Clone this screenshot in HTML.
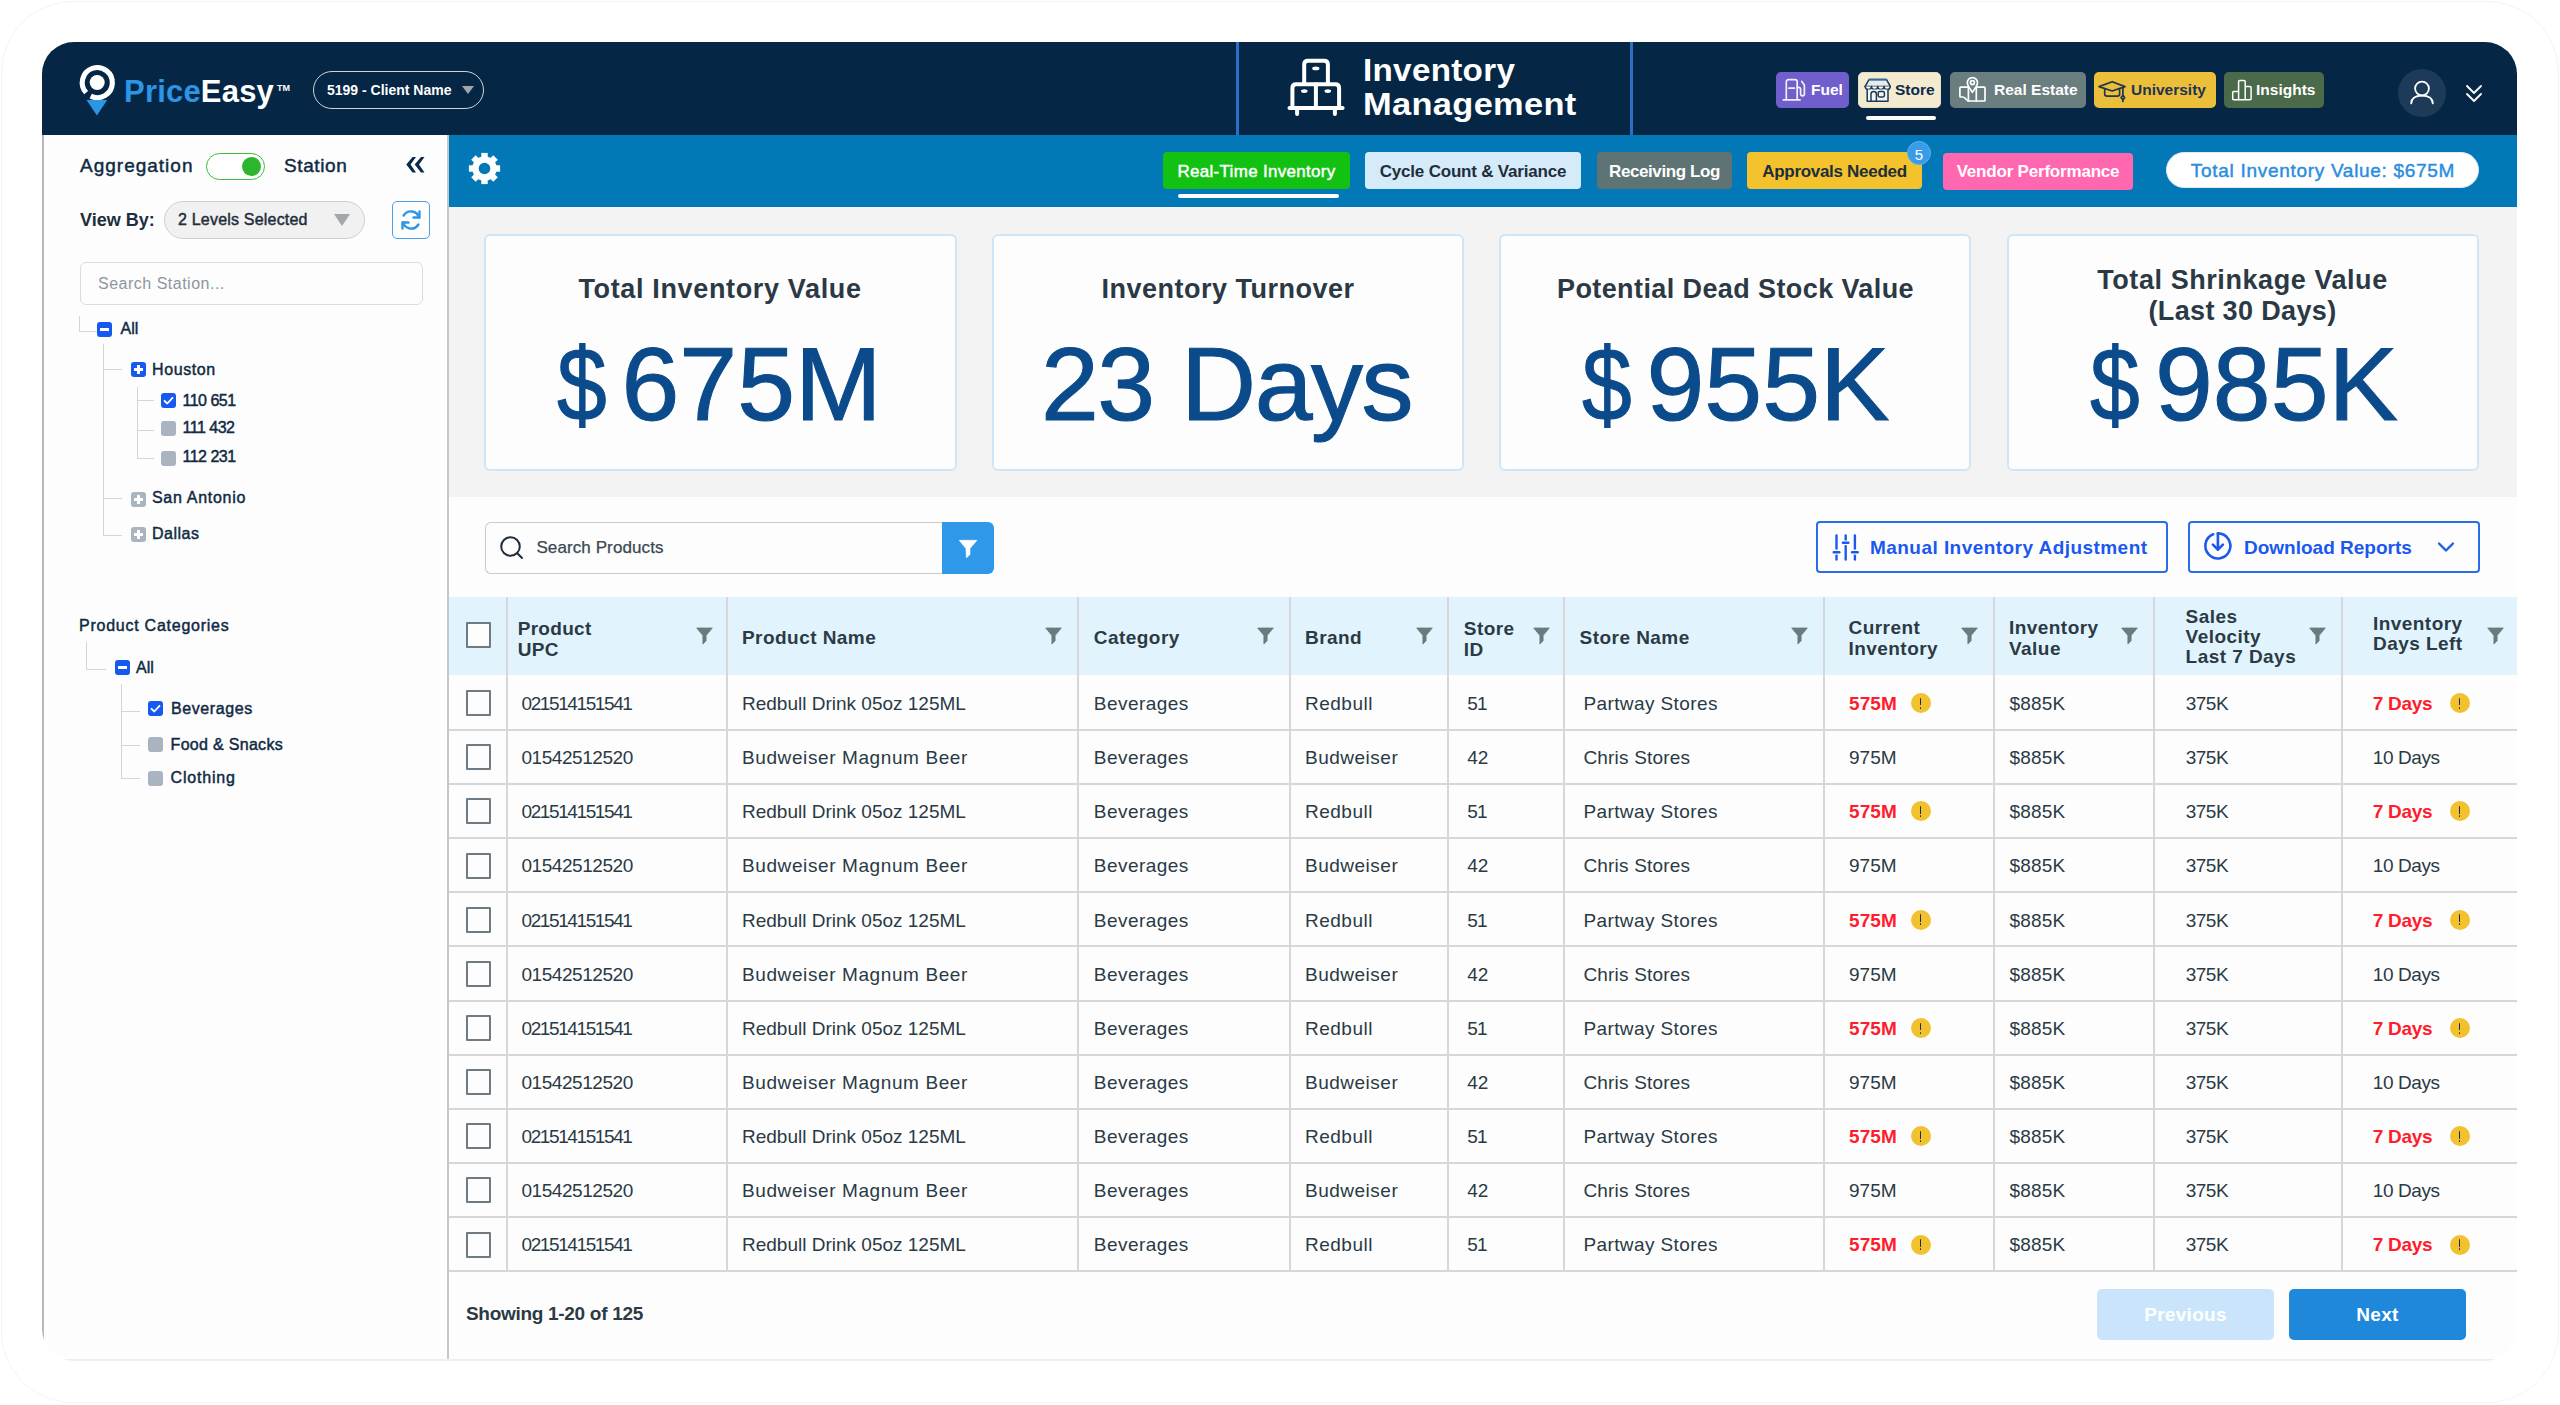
<!DOCTYPE html>
<html><head><meta charset="utf-8"><title>Inventory Management</title>
<style>
html,body{margin:0;padding:0;}
body{width:2560px;height:1405px;overflow:hidden;background:#ffffff;position:relative;font-family:"Liberation Sans", sans-serif;}
.t{position:absolute;white-space:nowrap;line-height:1;}
.r{position:absolute;box-sizing:border-box;}
#clip{position:absolute;left:0;top:0;width:2560px;height:1405px;clip-path:inset(42px 43px 44px 42px round 32px);}
</style></head><body>

<div class="r" style="left:1px;top:1px;width:2558px;height:1402px;border:1px solid #f3f4f5;border-radius:72px;"></div>
<div id="clip">
<div class="r" style="left:42px;top:42px;width:2475px;height:1319px;background:#fdfdfd;"></div>
<div class="r" style="left:42px;top:42px;width:2475px;height:93px;background:#052745;"></div>
<div class="r" style="left:448px;top:135px;width:2069px;height:72px;background:#0378b6;"></div>
<div class="r" style="left:448px;top:207px;width:2069px;height:290px;background:#f3f3f3;"></div>
<div class="r" style="left:42px;top:135px;width:2px;height:1226px;background:#b3b9bf;"></div>
<div class="r" style="left:447px;top:135px;width:2px;height:1226px;background:#c3c8cd;"></div>
<div class="r" style="left:42px;top:1359px;width:2475px;height:2px;background:#eceef0;"></div>
<svg class="r" style="left:76px;top:62px;" width="44" height="58" viewBox="0 0 44 58">
<path d="M10.12 30.67 A15.05 15.05 0 1 1 14.7 34.13" fill="none" stroke="#fff" stroke-width="5.1" stroke-linecap="butt"/>
<circle cx="21.2" cy="20.5" r="7.5" fill="#fff"/>
<path d="M10.5 37.9 L31.2 37.9 L20.9 53.5 Z" fill="#2b95e6"/>
</svg>
<div class="t" style="left:124px;top:75.8px;font-size:31px;color:#ffffff;font-weight:700;letter-spacing:0.2px;"><span style="color:#2b95e6">Price</span>Easy</div>
<div class="t" style="left:277px;top:83.9px;font-size:9px;color:#ffffff;font-weight:700;letter-spacing:0px;">TM</div>
<div class="r" style="left:313px;top:71px;width:171px;height:38px;border:1.5px solid #cfd3d6;border-radius:19px;"></div>
<div class="t" style="left:327px;top:82.6px;font-size:14px;color:#ffffff;font-weight:700;letter-spacing:0px;">5199 - Client Name</div>
<svg class="r" style="left:461px;top:85px;" width="14" height="10" viewBox="0 0 14 10"><path d="M1 1 L13 1 L7 9 Z" fill="#a3a6a8"/></svg>
<div class="r" style="left:1236px;top:42px;width:3px;height:93px;background:#2d6fc4;"></div>
<div class="r" style="left:1630px;top:42px;width:3px;height:93px;background:#2d6fc4;"></div>
<svg class="r" style="left:1280px;top:50px;" width="70" height="75" viewBox="0 0 70 75">
<g fill="none" stroke="#fff" stroke-width="4" stroke-linejoin="round" stroke-linecap="round">
<path d="M24.2 33 V14.6 Q24.2 10.8 28 10.8 H44.1 Q47.9 10.8 47.9 14.6 V33"/>
<path d="M12.4 57.8 V38.1 Q12.4 34.3 16.2 34.3 H55.3 Q59.1 34.3 59.1 38.1 V57.8"/>
<path d="M35.9 34.3 V57.8"/>
<path d="M9.5 58 H62.6"/>
<path d="M17.1 58.5 V63.9"/><path d="M54.9 58.5 V63.9"/>
</g>
<g fill="#fff"><ellipse cx="35.8" cy="18.4" rx="3.6" ry="1.9"/><ellipse cx="24.3" cy="41.1" rx="3.3" ry="1.9"/><ellipse cx="47.8" cy="41.1" rx="3.3" ry="1.9"/></g>
</svg>
<div class="t" style="left:1363px;top:54.8px;font-size:31px;color:#ffffff;font-weight:700;letter-spacing:0.3px;transform:scaleX(1.07);transform-origin:0 0;">Inventory</div>
<div class="t" style="left:1363px;top:88.8px;font-size:31px;color:#ffffff;font-weight:700;letter-spacing:0.3px;transform:scaleX(1.11);transform-origin:0 0;">Management</div>
<div class="r" style="left:1776px;top:72px;width:73px;height:36px;background:#6f5ecc;border-radius:5px;"></div>
<div class="t" style="left:1811px;top:82.4px;font-size:15.5px;color:#ffffff;font-weight:700;letter-spacing:0px;">Fuel</div>

<svg class="r" style="left:1778px;top:72px;" width="36" height="36" viewBox="0 0 36 36"><g fill="none" stroke="#f0f1f2" stroke-width="1.7" stroke-linecap="round" stroke-linejoin="round">
<path d="M8.3 27.7 V10 Q8.3 7.7 10.6 7.7 H17 Q19.2 7.7 19.2 10 V27.7"/><path d="M5.4 27.9 H22"/><path d="M10.9 16.2 H16.4"/>
<path d="M19.2 15.3 H20.6 Q22.6 15.3 22.6 17.6 V21.4 Q22.6 23.8 24.5 23.8 Q26.4 23.8 26.4 21.4 V13.3 L23.8 9.5"/></g></svg>
<div class="r" style="left:1858px;top:72px;width:83px;height:36px;background:#f3ead0;border-radius:5px;border:1px solid #e6dcc0;"></div>
<div class="t" style="left:1895px;top:82.4px;font-size:15.5px;color:#0b2a4a;font-weight:700;letter-spacing:0px;">Store</div>

<svg class="r" style="left:1860px;top:72px;" width="40" height="36" viewBox="0 0 40 36"><g fill="none" stroke="#1d3a57" stroke-width="1.5" stroke-linejoin="round" stroke-linecap="round">
<path d="M9.2 7.4 H26.4 L30.3 14.4 H5.1 Z" fill="#e9ebe8"/>
<path d="M9.6 7.6 H26" stroke="#2d6aa8" stroke-width="1.6"/>
<path d="M5.1 14.4 Q5.6 17.6 8.4 17.6 Q11.4 17.6 11.4 14.6 Q11.6 17.6 14.6 17.6 Q17.6 17.6 17.7 14.6 Q17.8 17.6 20.9 17.6 Q23.9 17.6 24 14.6 Q24.2 17.6 27.2 17.6 Q30 17.6 30.3 14.4" fill="#ffffff"/>
<path d="M7.2 17.4 V29.2 H28 V17.4" fill="#f4f4f2"/>
<path d="M11 29.2 V21.9 Q11 19.5 13.7 19.5 Q16.4 19.5 16.4 21.9 V29.2"/>
<rect x="18.2" y="19.6" width="6.2" height="5.3" rx="1.3"/></g></svg>
<div class="r" style="left:1866px;top:116px;width:70px;height:4px;background:#ffffff;border-radius:2px;"></div>
<div class="r" style="left:1950px;top:72px;width:136px;height:36px;background:#6a7e80;border-radius:5px;"></div>
<div class="t" style="left:1994px;top:82.4px;font-size:15.5px;color:#ffffff;font-weight:700;letter-spacing:0px;">Real Estate</div>

<svg class="r" style="left:1954px;top:72px;" width="36" height="36" viewBox="0 0 36 36"><g fill="none" stroke="#fff" stroke-width="1.7" stroke-linejoin="round" stroke-linecap="round">
<path d="M14.4 15.1 H6.8 Q5.9 15.1 5.9 16 V24.2 Q5.9 25 6.8 25 H8.6 Q10.2 25 11.6 26.6 L12.6 27.8 Q13.6 29 15 29 H30.2 Q31 29 31 28.2 V16 Q31 15.1 30.2 15.1 H22.3"/>
<path d="M14.4 15.1 V29"/><path d="M22.3 15.1 V29"/>
<path d="M18.4 20.4 L14.6 14.4 Q13.3 12.4 13.3 10.8 A5.1 5.1 0 0 1 23.5 10.8 Q23.5 12.4 22.2 14.4 Z" fill="#6a7e80"/>
<circle cx="18.4" cy="10.6" r="2"/></g></svg>
<div class="r" style="left:2094px;top:72px;width:122px;height:36px;background:#ecbf3b;border-radius:5px;"></div>
<div class="t" style="left:2131px;top:82.4px;font-size:15.5px;color:#1e3550;font-weight:700;letter-spacing:0px;">University</div>

<svg class="r" style="left:2096px;top:72px;" width="36" height="36" viewBox="0 0 36 36"><g fill="none" stroke="#1e3550" stroke-width="1.7" stroke-linejoin="round" stroke-linecap="round">
<path d="M3.1 14.6 L16.2 9.7 L29 14.6 L16.2 19 Z"/><path d="M8.7 17.2 V22.6 Q8.7 24.2 11 24.2 H21.4 Q23.6 24.2 23.6 22.6 V17.2"/>
<path d="M26.9 15.2 V23.6"/><path d="M26.9 23.4 L28.7 25.6 L26.9 27.6 L25.1 25.6 Z"/><path d="M26.9 27.6 V29.4"/></g></svg>
<div class="r" style="left:2224px;top:72px;width:100px;height:36px;background:#4a6a49;border-radius:5px;"></div>
<div class="t" style="left:2256px;top:82.4px;font-size:15.5px;color:#ffffff;font-weight:700;letter-spacing:0px;">Insights</div>

<svg class="r" style="left:2226px;top:72px;" width="36" height="36" viewBox="0 0 36 36"><g fill="none" stroke="#fff" stroke-width="1.5" stroke-linejoin="round">
<path d="M12.6 27.7 H7.6 Q6.7 27.7 6.7 26.8 V20.4 Q6.7 19.5 7.6 19.5 H12.6"/>
<path d="M12.6 27.7 V9.6 Q12.6 8.5 13.7 8.5 H18.1 Q19.2 8.5 19.2 9.6 V27.7 Z"/>
<path d="M19.2 14.6 H24 Q25.1 14.6 25.1 15.7 V26.6 Q25.1 27.7 24 27.7 H19.2"/></g></svg>
<div class="r" style="left:2398px;top:69px;width:48px;height:48px;background:#1d3a58;border-radius:50%;"></div>
<svg class="r" style="left:2408px;top:78px;" width="28" height="28" viewBox="0 0 28 28"><g fill="none" stroke="#fff" stroke-width="1.8" stroke-linecap="round">
<circle cx="14" cy="10.6" r="6.9"/><path d="M3.2 25.4 Q3.5 17.6 14 17.6 Q24.5 17.6 24.8 25.4"/></g></svg>
<svg class="r" style="left:2464px;top:83px;" width="20" height="22" viewBox="0 0 20 22"><g fill="none" stroke="#fff" stroke-width="1.8" stroke-linecap="round" stroke-linejoin="round">
<path d="M3 3 L10 10 L17 3"/><path d="M3 11 L10 18 L17 11"/></g></svg>
<svg class="r" style="left:466px;top:150px;" width="37" height="37" viewBox="0 0 37 37"><g fill="#fff"><circle cx="18.5" cy="18.5" r="12.2"/><rect x="15.3" y="2.9" width="6.4" height="8" transform="rotate(0 18.5 18.5)"/><rect x="15.3" y="2.9" width="6.4" height="8" transform="rotate(45 18.5 18.5)"/><rect x="15.3" y="2.9" width="6.4" height="8" transform="rotate(90 18.5 18.5)"/><rect x="15.3" y="2.9" width="6.4" height="8" transform="rotate(135 18.5 18.5)"/><rect x="15.3" y="2.9" width="6.4" height="8" transform="rotate(180 18.5 18.5)"/><rect x="15.3" y="2.9" width="6.4" height="8" transform="rotate(225 18.5 18.5)"/><rect x="15.3" y="2.9" width="6.4" height="8" transform="rotate(270 18.5 18.5)"/><rect x="15.3" y="2.9" width="6.4" height="8" transform="rotate(315 18.5 18.5)"/></g><circle cx="18.5" cy="18.5" r="5.8" fill="#0378b6"/></svg>
<div class="r" style="left:1163px;top:152px;width:187px;height:37px;background:#12c112;border-radius:4px;"></div>
<div class="t" style="left:1143.0px;width:227px;text-align:center;top:163.1px;font-size:17px;color:#ffffff;font-weight:400;letter-spacing:0.3px;-webkit-text-stroke:0.45px #ffffff;">Real-Time Inventory</div>
<div class="r" style="left:1178px;top:194px;width:161px;height:4px;background:#ffffff;border-radius:2px;"></div>
<div class="r" style="left:1365px;top:152px;width:216px;height:37px;background:#d5ebfa;border-radius:4px;"></div>
<div class="t" style="left:1345.0px;width:256px;text-align:center;top:163.1px;font-size:17px;color:#1e2e3c;font-weight:700;letter-spacing:-0.2px;">Cycle Count &amp; Variance</div>
<div class="r" style="left:1597px;top:152px;width:135px;height:37px;background:#5e7374;border-radius:4px;"></div>
<div class="t" style="left:1577.0px;width:175px;text-align:center;top:163.1px;font-size:17px;color:#ffffff;font-weight:700;letter-spacing:-0.4px;">Receiving Log</div>
<div class="r" style="left:1747px;top:152px;width:175px;height:37px;background:#f3c22d;border-radius:4px;"></div>
<div class="t" style="left:1727.0px;width:215px;text-align:center;top:163.1px;font-size:17px;color:#1e2e3c;font-weight:700;letter-spacing:-0.3px;">Approvals Needed</div>
<div class="r" style="left:1907px;top:141px;width:24px;height:24px;background:#3a9be8;border-radius:50%;border:1.5px solid #5fb0f0;"></div>
<div class="t" style="left:1904.0px;width:30px;text-align:center;top:146.8px;font-size:15px;color:#ffffff;font-weight:400;letter-spacing:0px;">5</div>
<div class="r" style="left:1943px;top:153px;width:190px;height:37px;background:#ff68b0;border-radius:4px;"></div>
<div class="t" style="left:1923.0px;width:230px;text-align:center;top:163.1px;font-size:17px;color:#ffffff;font-weight:700;letter-spacing:-0.2px;">Vendor Performance</div>
<div class="r" style="left:2166px;top:152px;width:313px;height:36px;background:#ffffff;border-radius:18px;border:1px solid #dfe9f2;"></div>
<div class="t" style="left:2153.0px;width:340px;text-align:center;top:161.4px;font-size:19px;color:#2b8de0;font-weight:400;letter-spacing:0.7px;-webkit-text-stroke:0.45px #2b8de0;">Total Inventory Value: $675M</div>
<div class="t" style="left:80px;top:156.4px;font-size:19px;color:#102a43;font-weight:400;letter-spacing:1.0px;-webkit-text-stroke:0.45px #102a43;">Aggregation</div>
<div class="r" style="left:206px;top:153px;width:59px;height:27px;border:1.6px solid #3cbb3c;border-radius:14px;background:#fff;"></div>
<div class="r" style="left:241.5px;top:156.5px;width:19.0px;height:19.0px;background:#2db52d;border-radius:50%;"></div>
<div class="t" style="left:284px;top:156.4px;font-size:19px;color:#102a43;font-weight:400;letter-spacing:0.6px;-webkit-text-stroke:0.45px #102a43;">Station</div>
<svg class="r" style="left:396px;top:148px;" width="40" height="32" viewBox="0 0 40 32"><g fill="#0a2a4a"><path d="M20 8.9 H16.6 L10.25 16.6 L16.6 24.6 H20 L14.6 16.6 Z"/><path d="M28.5 8.9 H25 L18.7 16.6 L25 24.6 H28.5 L23 16.6 Z"/></g></svg>
<div class="t" style="left:80px;top:210.8px;font-size:18px;color:#1e2e3c;font-weight:700;letter-spacing:0px;">View By:</div>
<div class="r" style="left:164px;top:201px;width:201px;height:38px;background:#f1f1f1;border:1.5px solid #cfcfcf;border-radius:19px;"></div>
<div class="t" style="left:178px;top:212.0px;font-size:16px;color:#1e2e3c;font-weight:400;letter-spacing:0.2px;-webkit-text-stroke:0.45px #1e2e3c;">2 Levels Selected</div>
<svg class="r" style="left:333px;top:213px;" width="18" height="14" viewBox="0 0 18 14"><path d="M1 1 L17 1 L9 13 Z" fill="#a4a7a9"/></svg>
<div class="r" style="left:392px;top:201px;width:38px;height:38px;border:1.5px solid #4a9ee8;border-radius:5px;background:#fdfdfd;"></div>
<svg class="r" style="left:399px;top:208px;" width="24" height="24" viewBox="0 0 24 24"><g fill="none" stroke="#3094e6" stroke-width="2.4" stroke-linecap="round" stroke-linejoin="round">
<path d="M20 9.5 A8.5 8.5 0 0 0 4.6 7.5"/><path d="M4 14.5 A8.5 8.5 0 0 0 19.4 16.5"/>
<path d="M20.5 3.5 V9.5 H14.5"/><path d="M3.5 20.5 V14.5 H9.5"/></g></svg>
<div class="r" style="left:80px;top:262px;width:343px;height:43px;border:1.5px solid #d9dcdf;border-radius:6px;background:#fdfdfd;"></div>
<div class="t" style="left:98px;top:275.5px;font-size:16px;color:#8d969d;font-weight:400;letter-spacing:0.5px;">Search Station...</div>
<div class="r" style="left:79px;top:316px;width:1px;height:15px;background:#d3d6d9;"></div>
<div class="r" style="left:79px;top:331px;width:18px;height:1px;background:#d3d6d9;"></div>
<div class="r" style="left:97px;top:322px;width:15px;height:15px;background:#1559f0;border-radius:3px;"></div>
<div class="r" style="left:100px;top:328px;width:9px;height:3px;background:#fff;"></div>
<div class="t" style="left:120.5px;top:320.5px;font-size:16px;color:#102a43;font-weight:400;letter-spacing:0px;-webkit-text-stroke:0.45px #102a43;">All</div>
<div class="r" style="left:103px;top:344px;width:1px;height:191px;background:#d3d6d9;"></div>
<div class="r" style="left:103px;top:369px;width:19px;height:1px;background:#d3d6d9;"></div>
<div class="r" style="left:103px;top:498px;width:19px;height:1px;background:#d3d6d9;"></div>
<div class="r" style="left:103px;top:535px;width:19px;height:1px;background:#d3d6d9;"></div>
<div class="r" style="left:131px;top:362px;width:15px;height:15px;background:#1559f0;border-radius:3px;"></div>
<div class="r" style="left:134px;top:368px;width:9px;height:3px;background:#fff;"></div>
<div class="r" style="left:137px;top:365px;width:3px;height:9px;background:#fff;"></div>
<div class="t" style="left:152px;top:361.5px;font-size:16px;color:#102a43;font-weight:400;letter-spacing:0.6px;-webkit-text-stroke:0.45px #102a43;">Houston</div>
<div class="r" style="left:137px;top:387px;width:1px;height:72px;background:#d3d6d9;"></div>
<div class="r" style="left:137px;top:400px;width:17px;height:1px;background:#d3d6d9;"></div>
<div class="r" style="left:137px;top:430px;width:17px;height:1px;background:#d3d6d9;"></div>
<div class="r" style="left:137px;top:458px;width:17px;height:1px;background:#d3d6d9;"></div>
<div class="r" style="left:161px;top:393px;width:15px;height:15px;background:#1559f0;border-radius:3px;"></div>
<svg class="r" style="left:161px;top:393px;" width="15" height="15" viewBox="0 0 15 15"><path d="M3.5 7.8 L6.3 10.5 L11.5 4.8" fill="none" stroke="#fff" stroke-width="1.8" stroke-linecap="round" stroke-linejoin="round"/></svg>
<div class="t" style="left:182.5px;top:392.5px;font-size:16px;color:#102a43;font-weight:400;letter-spacing:-0.5px;-webkit-text-stroke:0.45px #102a43;">110 651</div>
<div class="r" style="left:161px;top:421px;width:15px;height:15px;background:#a9b4c0;border-radius:3px;"></div>
<div class="t" style="left:182.5px;top:419.8px;font-size:16px;color:#102a43;font-weight:400;letter-spacing:-0.5px;-webkit-text-stroke:0.45px #102a43;">111 432</div>
<div class="r" style="left:161px;top:451px;width:15px;height:15px;background:#a9b4c0;border-radius:3px;"></div>
<div class="t" style="left:182.5px;top:449.1px;font-size:16px;color:#102a43;font-weight:400;letter-spacing:-0.5px;-webkit-text-stroke:0.45px #102a43;">112 231</div>
<div class="r" style="left:131px;top:492px;width:15px;height:15px;background:#a9b4bf;border-radius:3px;"></div>
<div class="r" style="left:134px;top:498px;width:9px;height:3px;background:#fff;"></div>
<div class="r" style="left:137px;top:495px;width:3px;height:9px;background:#fff;"></div>
<div class="t" style="left:152px;top:490.2px;font-size:16px;color:#102a43;font-weight:400;letter-spacing:0.7px;-webkit-text-stroke:0.45px #102a43;">San Antonio</div>
<div class="r" style="left:131px;top:527px;width:15px;height:15px;background:#a9b4bf;border-radius:3px;"></div>
<div class="r" style="left:134px;top:533px;width:9px;height:3px;background:#fff;"></div>
<div class="r" style="left:137px;top:530px;width:3px;height:9px;background:#fff;"></div>
<div class="t" style="left:152px;top:526.3px;font-size:16px;color:#102a43;font-weight:400;letter-spacing:0.5px;-webkit-text-stroke:0.45px #102a43;">Dallas</div>
<div class="t" style="left:79px;top:618.2px;font-size:16px;color:#102a43;font-weight:400;letter-spacing:0.75px;-webkit-text-stroke:0.45px #102a43;">Product Categories</div>
<div class="r" style="left:86px;top:642px;width:1px;height:27px;background:#d3d6d9;"></div>
<div class="r" style="left:86px;top:669px;width:20px;height:1px;background:#d3d6d9;"></div>
<div class="r" style="left:114.5px;top:660px;width:15.0px;height:15px;background:#1559f0;border-radius:3px;"></div>
<div class="r" style="left:117.5px;top:666px;width:9.0px;height:3px;background:#fff;"></div>
<div class="t" style="left:136px;top:659.5px;font-size:16px;color:#102a43;font-weight:400;letter-spacing:0px;-webkit-text-stroke:0.45px #102a43;">All</div>
<div class="r" style="left:121px;top:684px;width:1px;height:95px;background:#d3d6d9;"></div>
<div class="r" style="left:121px;top:711px;width:19px;height:1px;background:#d3d6d9;"></div>
<div class="r" style="left:121px;top:745px;width:19px;height:1px;background:#d3d6d9;"></div>
<div class="r" style="left:121px;top:778px;width:19px;height:1px;background:#d3d6d9;"></div>
<div class="r" style="left:148px;top:701px;width:15px;height:15px;background:#1559f0;border-radius:3px;"></div>
<svg class="r" style="left:148px;top:701px;" width="15" height="15" viewBox="0 0 15 15"><path d="M3.5 7.8 L6.3 10.5 L11.5 4.8" fill="none" stroke="#fff" stroke-width="1.8" stroke-linecap="round" stroke-linejoin="round"/></svg>
<div class="t" style="left:171px;top:700.5px;font-size:16px;color:#102a43;font-weight:400;letter-spacing:0.6px;-webkit-text-stroke:0.45px #102a43;">Beverages</div>
<div class="r" style="left:148px;top:737px;width:15px;height:15px;background:#a9b4c0;border-radius:3px;"></div>
<div class="t" style="left:170.6px;top:736.5px;font-size:16px;color:#102a43;font-weight:400;letter-spacing:0.3px;-webkit-text-stroke:0.45px #102a43;">Food &amp; Snacks</div>
<div class="r" style="left:148px;top:771px;width:15px;height:15px;background:#a9b4c0;border-radius:3px;"></div>
<div class="t" style="left:170.6px;top:769.5px;font-size:16px;color:#102a43;font-weight:400;letter-spacing:0.8px;-webkit-text-stroke:0.45px #102a43;">Clothing</div>
<div class="r" style="left:484px;top:234px;width:473px;height:237px;background:#fdfdfd;border:2px solid #cfe6f8;border-radius:6px;"></div>
<div class="r" style="left:992px;top:234px;width:472px;height:237px;background:#fdfdfd;border:2px solid #cfe6f8;border-radius:6px;"></div>
<div class="r" style="left:1499px;top:234px;width:472px;height:237px;background:#fdfdfd;border:2px solid #cfe6f8;border-radius:6px;"></div>
<div class="r" style="left:2007px;top:234px;width:472px;height:237px;background:#fdfdfd;border:2px solid #cfe6f8;border-radius:6px;"></div>
<div class="t" style="left:420.0px;width:600px;text-align:center;top:275.6px;font-size:27px;color:#2b3945;font-weight:700;letter-spacing:0.65px;">Total Inventory Value</div>
<div class="t" style="left:928.0px;width:600px;text-align:center;top:275.6px;font-size:27px;color:#2b3945;font-weight:700;letter-spacing:0.5px;">Inventory Turnover</div>
<div class="t" style="left:1435.5px;width:600px;text-align:center;top:275.6px;font-size:27px;color:#2b3945;font-weight:700;letter-spacing:0.4px;">Potential Dead Stock Value</div>
<div class="t" style="left:1942.5px;width:600px;text-align:center;top:267.1px;font-size:27px;color:#2b3945;font-weight:700;letter-spacing:0.57px;">Total Shrinkage Value</div>
<div class="t" style="left:1942.5px;width:600px;text-align:center;top:298.1px;font-size:27px;color:#2b3945;font-weight:700;letter-spacing:0.35px;">(Last 30 Days)</div>
<div class="t" style="left:556.5px;top:331.5px;font-size:104px;color:#0b4b8b;font-weight:400;letter-spacing:0px;-webkit-text-stroke:1.1px #0b4b8b;"><span style="display:inline-block;width:65px;transform:scaleX(0.86);transform-origin:0 0">$</span>675M</div>
<div class="t" style="left:976.5px;width:500px;text-align:center;top:331.5px;font-size:104px;color:#0b4b8b;font-weight:400;letter-spacing:-1.5px;-webkit-text-stroke:1.1px #0b4b8b;">23 Days</div>
<div class="t" style="left:1581.5px;top:331.5px;font-size:104px;color:#0b4b8b;font-weight:400;letter-spacing:0px;-webkit-text-stroke:1.1px #0b4b8b;"><span style="display:inline-block;width:65px;transform:scaleX(0.86);transform-origin:0 0">$</span>955K</div>
<div class="t" style="left:2090px;top:331.5px;font-size:104px;color:#0b4b8b;font-weight:400;letter-spacing:0px;-webkit-text-stroke:1.1px #0b4b8b;"><span style="display:inline-block;width:65px;transform:scaleX(0.86);transform-origin:0 0">$</span>985K</div>
<div class="r" style="left:485px;top:522px;width:459px;height:52px;border:1.5px solid #c8ccd0;border-right:none;border-radius:6px 0 0 6px;background:#fdfdfd;"></div>
<div class="r" style="left:942px;top:522px;width:52px;height:52px;background:#2f98e8;border-radius:0 6px 6px 0;"></div>
<svg class="r" style="left:950px;top:530px;" width="36" height="36" viewBox="0 0 36 36"><path d="M9.2 10.3 H27 L20 18.5 V24.4 L16.4 28 L15.9 18.5 Z" fill="#fff" stroke="#fff" stroke-width="0.6" stroke-linejoin="round"/></svg>
<svg class="r" style="left:499px;top:535px;" width="26" height="26" viewBox="0 0 26 26"><g fill="none" stroke="#1e2e3c" stroke-width="2" stroke-linecap="round"><circle cx="11.5" cy="11.5" r="9.3"/><path d="M18.3 18.3 L23 23"/></g></svg>
<div class="t" style="left:536.4px;top:539.4px;font-size:17px;color:#3a4852;font-weight:400;letter-spacing:0.1px;-webkit-text-stroke:0.25px #3a4852;">Search Products</div>
<div class="r" style="left:1816px;top:521px;width:352px;height:52px;border:2px solid #2a6de6;border-radius:4px;background:#fdfdfd;"></div>
<svg class="r" style="left:1826px;top:528px;" width="40" height="40" viewBox="0 0 40 40"><g fill="none" stroke="#1b58ee" stroke-width="2.4" stroke-linecap="round">
<path d="M10.5 7.4 V20.5"/><path d="M7.8 24.2 H13.3"/><path d="M10.5 27.6 V31.6"/>
<path d="M19.7 7.4 V11.4"/><path d="M16.9 14.8 H22.4"/><path d="M19.7 18.2 V31.6"/>
<path d="M28.9 7.4 V20.5"/><path d="M26.1 24.2 H31.7"/><path d="M28.9 27.6 V31.6"/></g></svg>
<div class="t" style="left:1870px;top:538.3px;font-size:19px;color:#1b58ee;font-weight:700;letter-spacing:0.45px;">Manual Inventory Adjustment</div>
<div class="r" style="left:2188px;top:521px;width:292px;height:52px;border:2px solid #2a6de6;border-radius:4px;background:#fdfdfd;"></div>
<svg class="r" style="left:2196px;top:524px;" width="44" height="44" viewBox="0 0 44 44"><g fill="none" stroke="#1b58ee" stroke-width="2.6" stroke-linecap="round" stroke-linejoin="round">
<path d="M21.9 9.4 A12.5 12.5 0 1 1 17.2 10.3"/><path d="M21.9 9.4 V25.5"/><path d="M16.9 20.6 L21.9 25.6 L26.9 20.6"/></g></svg>
<div class="t" style="left:2244px;top:538.3px;font-size:19px;color:#1b58ee;font-weight:700;letter-spacing:0px;">Download Reports</div>
<svg class="r" style="left:2437px;top:541px;" width="18" height="12" viewBox="0 0 18 12"><path d="M2 2.5 L9 9.5 L16 2.5" fill="none" stroke="#1b5ee8" stroke-width="2.4" stroke-linecap="round" stroke-linejoin="round"/></svg>
<div class="r" style="left:449px;top:597px;width:2068px;height:78px;background:#e1f4fd;"></div>
<div class="r" style="left:449px;top:728.8px;width:2068px;height:2.0px;background:#d5d7d9;"></div>
<div class="r" style="left:449px;top:782.9399999999999px;width:2068px;height:2.0px;background:#d5d7d9;"></div>
<div class="r" style="left:449px;top:837.0799999999999px;width:2068px;height:2.0px;background:#d5d7d9;"></div>
<div class="r" style="left:449px;top:891.22px;width:2068px;height:2.0px;background:#d5d7d9;"></div>
<div class="r" style="left:449px;top:945.3599999999999px;width:2068px;height:2.0px;background:#d5d7d9;"></div>
<div class="r" style="left:449px;top:999.5px;width:2068px;height:2.0px;background:#d5d7d9;"></div>
<div class="r" style="left:449px;top:1053.6399999999999px;width:2068px;height:2.0px;background:#d5d7d9;"></div>
<div class="r" style="left:449px;top:1107.78px;width:2068px;height:2.0px;background:#d5d7d9;"></div>
<div class="r" style="left:449px;top:1161.92px;width:2068px;height:2.0px;background:#d5d7d9;"></div>
<div class="r" style="left:449px;top:1216.06px;width:2068px;height:2.0px;background:#d5d7d9;"></div>
<div class="r" style="left:449px;top:1270.1999999999998px;width:2068px;height:2.0px;background:#d5d7d9;"></div>
<div class="r" style="left:506px;top:597px;width:1.5px;height:675px;background:#d5d7d9;"></div>
<div class="r" style="left:726px;top:597px;width:1.5px;height:675px;background:#d5d7d9;"></div>
<div class="r" style="left:1077px;top:597px;width:1.5px;height:675px;background:#d5d7d9;"></div>
<div class="r" style="left:1289px;top:597px;width:1.5px;height:675px;background:#d5d7d9;"></div>
<div class="r" style="left:1447px;top:597px;width:1.5px;height:675px;background:#d5d7d9;"></div>
<div class="r" style="left:1563px;top:597px;width:1.5px;height:675px;background:#d5d7d9;"></div>
<div class="r" style="left:1823px;top:597px;width:1.5px;height:675px;background:#d5d7d9;"></div>
<div class="r" style="left:1993px;top:597px;width:1.5px;height:675px;background:#d5d7d9;"></div>
<div class="r" style="left:2153px;top:597px;width:1.5px;height:675px;background:#d5d7d9;"></div>
<div class="r" style="left:2341px;top:597px;width:1.5px;height:675px;background:#d5d7d9;"></div>
<div class="r" style="left:465.5px;top:622px;width:25.5px;height:26px;border:2px solid #6e7b82;background:#fdfdfd;border-radius:1px;"></div>
<div class="t" style="left:517.7px;top:618.9px;font-size:19px;color:#2c3a45;font-weight:700;letter-spacing:0.3px;">Product</div>
<div class="t" style="left:517.7px;top:639.9px;font-size:19px;color:#2c3a45;font-weight:700;letter-spacing:0.3px;">UPC</div>
<div class="t" style="left:742px;top:627.6px;font-size:19px;color:#2c3a45;font-weight:700;letter-spacing:0.45px;">Product Name</div>
<div class="t" style="left:1093.8px;top:627.6px;font-size:19px;color:#2c3a45;font-weight:700;letter-spacing:0.45px;">Category</div>
<div class="t" style="left:1305px;top:627.6px;font-size:19px;color:#2c3a45;font-weight:700;letter-spacing:0.45px;">Brand</div>
<div class="t" style="left:1463.8px;top:619.3px;font-size:19px;color:#2c3a45;font-weight:700;letter-spacing:0.45px;">Store</div>
<div class="t" style="left:1463.8px;top:639.9px;font-size:19px;color:#2c3a45;font-weight:700;letter-spacing:0.45px;">ID</div>
<div class="t" style="left:1579.6px;top:627.6px;font-size:19px;color:#2c3a45;font-weight:700;letter-spacing:0.45px;">Store Name</div>
<div class="t" style="left:1848.5px;top:618.3px;font-size:19px;color:#2c3a45;font-weight:700;letter-spacing:0.45px;">Current</div>
<div class="t" style="left:1848.5px;top:638.6px;font-size:19px;color:#2c3a45;font-weight:700;letter-spacing:0.45px;">Inventory</div>
<div class="t" style="left:2009px;top:618.3px;font-size:19px;color:#2c3a45;font-weight:700;letter-spacing:0.45px;">Inventory</div>
<div class="t" style="left:2009px;top:638.6px;font-size:19px;color:#2c3a45;font-weight:700;letter-spacing:0.45px;">Value</div>
<div class="t" style="left:2185.6px;top:606.8px;font-size:19px;color:#2c3a45;font-weight:700;letter-spacing:0.45px;">Sales</div>
<div class="t" style="left:2185.6px;top:626.9px;font-size:19px;color:#2c3a45;font-weight:700;letter-spacing:0.45px;">Velocity</div>
<div class="t" style="left:2185.6px;top:647.2px;font-size:19px;color:#2c3a45;font-weight:700;letter-spacing:0.45px;">Last 7 Days</div>
<div class="t" style="left:2373px;top:613.9px;font-size:19px;color:#2c3a45;font-weight:700;letter-spacing:0.45px;">Inventory</div>
<div class="t" style="left:2373px;top:634.2px;font-size:19px;color:#2c3a45;font-weight:700;letter-spacing:0.45px;">Days Left</div>
<svg class="r" style="left:696px;top:627px;" width="17" height="18" viewBox="0 0 17 18"><path d="M0.7 1 H16.3 L10.1 8.5 V13.7 L6.9 17.1 V8.5 Z" fill="#6b7a7d" stroke="#6b7a7d" stroke-width="0.8" stroke-linejoin="round"/></svg>
<svg class="r" style="left:1045px;top:627px;" width="17" height="18" viewBox="0 0 17 18"><path d="M0.7 1 H16.3 L10.1 8.5 V13.7 L6.9 17.1 V8.5 Z" fill="#6b7a7d" stroke="#6b7a7d" stroke-width="0.8" stroke-linejoin="round"/></svg>
<svg class="r" style="left:1257px;top:627px;" width="17" height="18" viewBox="0 0 17 18"><path d="M0.7 1 H16.3 L10.1 8.5 V13.7 L6.9 17.1 V8.5 Z" fill="#6b7a7d" stroke="#6b7a7d" stroke-width="0.8" stroke-linejoin="round"/></svg>
<svg class="r" style="left:1416px;top:627px;" width="17" height="18" viewBox="0 0 17 18"><path d="M0.7 1 H16.3 L10.1 8.5 V13.7 L6.9 17.1 V8.5 Z" fill="#6b7a7d" stroke="#6b7a7d" stroke-width="0.8" stroke-linejoin="round"/></svg>
<svg class="r" style="left:1533px;top:627px;" width="17" height="18" viewBox="0 0 17 18"><path d="M0.7 1 H16.3 L10.1 8.5 V13.7 L6.9 17.1 V8.5 Z" fill="#6b7a7d" stroke="#6b7a7d" stroke-width="0.8" stroke-linejoin="round"/></svg>
<svg class="r" style="left:1791px;top:627px;" width="17" height="18" viewBox="0 0 17 18"><path d="M0.7 1 H16.3 L10.1 8.5 V13.7 L6.9 17.1 V8.5 Z" fill="#6b7a7d" stroke="#6b7a7d" stroke-width="0.8" stroke-linejoin="round"/></svg>
<svg class="r" style="left:1961px;top:627px;" width="17" height="18" viewBox="0 0 17 18"><path d="M0.7 1 H16.3 L10.1 8.5 V13.7 L6.9 17.1 V8.5 Z" fill="#6b7a7d" stroke="#6b7a7d" stroke-width="0.8" stroke-linejoin="round"/></svg>
<svg class="r" style="left:2121px;top:627px;" width="17" height="18" viewBox="0 0 17 18"><path d="M0.7 1 H16.3 L10.1 8.5 V13.7 L6.9 17.1 V8.5 Z" fill="#6b7a7d" stroke="#6b7a7d" stroke-width="0.8" stroke-linejoin="round"/></svg>
<svg class="r" style="left:2309px;top:627px;" width="17" height="18" viewBox="0 0 17 18"><path d="M0.7 1 H16.3 L10.1 8.5 V13.7 L6.9 17.1 V8.5 Z" fill="#6b7a7d" stroke="#6b7a7d" stroke-width="0.8" stroke-linejoin="round"/></svg>
<svg class="r" style="left:2487px;top:627px;" width="17" height="18" viewBox="0 0 17 18"><path d="M0.7 1 H16.3 L10.1 8.5 V13.7 L6.9 17.1 V8.5 Z" fill="#6b7a7d" stroke="#6b7a7d" stroke-width="0.8" stroke-linejoin="round"/></svg>
<div class="r" style="left:465.5px;top:690.2px;width:25.5px;height:26.0px;border:2px solid #6e7b82;background:#fdfdfd;border-radius:1px;"></div>
<div class="t" style="left:521.5px;top:693.9px;font-size:19px;color:#2a3a45;font-weight:400;letter-spacing:-1.4px;">021514151541</div>
<div class="t" style="left:742px;top:693.9px;font-size:19px;color:#2a3a45;font-weight:400;letter-spacing:0px;">Redbull Drink 05oz 125ML</div>
<div class="t" style="left:1093.8px;top:693.9px;font-size:19px;color:#2a3a45;font-weight:400;letter-spacing:0.45px;">Beverages</div>
<div class="t" style="left:1305px;top:693.9px;font-size:19px;color:#2a3a45;font-weight:400;letter-spacing:0.5px;">Redbull</div>
<div class="t" style="left:1467.3px;top:693.9px;font-size:19px;color:#2a3a45;font-weight:400;letter-spacing:-0.8px;">51</div>
<div class="t" style="left:1583.4px;top:693.9px;font-size:19px;color:#2a3a45;font-weight:400;letter-spacing:0.4px;">Partway Stores</div>
<div class="t" style="left:1849px;top:693.9px;font-size:19px;color:#ff1c2c;font-weight:700;letter-spacing:0.1px;">575M</div>
<div class="r" style="left:1910.5px;top:693.2px;width:20.0px;height:20.0px;background:#f2c12e;border-radius:50%;"></div>
<div class="r" style="left:1919.7px;top:697.7px;width:1.7000000000000455px;height:7.7000000000000455px;background:#1c2a3a;border-radius:1px;"></div>
<div class="r" style="left:1919.6px;top:706.8000000000001px;width:1.900000000000091px;height:1.8999999999999773px;background:#1c2a3a;border-radius:50%;"></div>
<div class="t" style="left:2009.4px;top:693.9px;font-size:19px;color:#2a3a45;font-weight:400;letter-spacing:0.2px;">$885K</div>
<div class="t" style="left:2185.7px;top:693.9px;font-size:19px;color:#2a3a45;font-weight:400;letter-spacing:-0.5px;">375K</div>
<div class="t" style="left:2372.8px;top:693.9px;font-size:19px;color:#ff1c2c;font-weight:700;letter-spacing:-0.3px;">7 Days</div>
<div class="r" style="left:2449.5px;top:693.2px;width:20.0px;height:20.0px;background:#f2c12e;border-radius:50%;"></div>
<div class="r" style="left:2458.7px;top:697.7px;width:1.7000000000002728px;height:7.7000000000000455px;background:#1c2a3a;border-radius:1px;"></div>
<div class="r" style="left:2458.6px;top:706.8000000000001px;width:1.900000000000091px;height:1.8999999999999773px;background:#1c2a3a;border-radius:50%;"></div>
<div class="r" style="left:465.5px;top:744.34px;width:25.5px;height:26.0px;border:2px solid #6e7b82;background:#fdfdfd;border-radius:1px;"></div>
<div class="t" style="left:521.5px;top:748.1px;font-size:19px;color:#2a3a45;font-weight:400;letter-spacing:-0.45px;">01542512520</div>
<div class="t" style="left:742px;top:748.1px;font-size:19px;color:#2a3a45;font-weight:400;letter-spacing:0.6px;">Budweiser Magnum Beer</div>
<div class="t" style="left:1093.8px;top:748.1px;font-size:19px;color:#2a3a45;font-weight:400;letter-spacing:0.45px;">Beverages</div>
<div class="t" style="left:1305px;top:748.1px;font-size:19px;color:#2a3a45;font-weight:400;letter-spacing:0.5px;">Budweiser</div>
<div class="t" style="left:1467.3px;top:748.1px;font-size:19px;color:#2a3a45;font-weight:400;letter-spacing:0px;">42</div>
<div class="t" style="left:1583.4px;top:748.1px;font-size:19px;color:#2a3a45;font-weight:400;letter-spacing:0.2px;">Chris Stores</div>
<div class="t" style="left:1849px;top:748.1px;font-size:19px;color:#2a3a45;font-weight:400;letter-spacing:0px;">975M</div>
<div class="t" style="left:2009.4px;top:748.1px;font-size:19px;color:#2a3a45;font-weight:400;letter-spacing:0.2px;">$885K</div>
<div class="t" style="left:2185.7px;top:748.1px;font-size:19px;color:#2a3a45;font-weight:400;letter-spacing:-0.5px;">375K</div>
<div class="t" style="left:2372.8px;top:748.1px;font-size:19px;color:#2a3a45;font-weight:400;letter-spacing:-0.4px;">10 Days</div>
<div class="r" style="left:465.5px;top:798.48px;width:25.5px;height:26.0px;border:2px solid #6e7b82;background:#fdfdfd;border-radius:1px;"></div>
<div class="t" style="left:521.5px;top:802.2px;font-size:19px;color:#2a3a45;font-weight:400;letter-spacing:-1.4px;">021514151541</div>
<div class="t" style="left:742px;top:802.2px;font-size:19px;color:#2a3a45;font-weight:400;letter-spacing:0px;">Redbull Drink 05oz 125ML</div>
<div class="t" style="left:1093.8px;top:802.2px;font-size:19px;color:#2a3a45;font-weight:400;letter-spacing:0.45px;">Beverages</div>
<div class="t" style="left:1305px;top:802.2px;font-size:19px;color:#2a3a45;font-weight:400;letter-spacing:0.5px;">Redbull</div>
<div class="t" style="left:1467.3px;top:802.2px;font-size:19px;color:#2a3a45;font-weight:400;letter-spacing:-0.8px;">51</div>
<div class="t" style="left:1583.4px;top:802.2px;font-size:19px;color:#2a3a45;font-weight:400;letter-spacing:0.4px;">Partway Stores</div>
<div class="t" style="left:1849px;top:802.2px;font-size:19px;color:#ff1c2c;font-weight:700;letter-spacing:0.1px;">575M</div>
<div class="r" style="left:1910.5px;top:801.48px;width:20.0px;height:20.0px;background:#f2c12e;border-radius:50%;"></div>
<div class="r" style="left:1919.7px;top:805.98px;width:1.7000000000000455px;height:7.7000000000000455px;background:#1c2a3a;border-radius:1px;"></div>
<div class="r" style="left:1919.6px;top:815.08px;width:1.900000000000091px;height:1.8999999999999773px;background:#1c2a3a;border-radius:50%;"></div>
<div class="t" style="left:2009.4px;top:802.2px;font-size:19px;color:#2a3a45;font-weight:400;letter-spacing:0.2px;">$885K</div>
<div class="t" style="left:2185.7px;top:802.2px;font-size:19px;color:#2a3a45;font-weight:400;letter-spacing:-0.5px;">375K</div>
<div class="t" style="left:2372.8px;top:802.2px;font-size:19px;color:#ff1c2c;font-weight:700;letter-spacing:-0.3px;">7 Days</div>
<div class="r" style="left:2449.5px;top:801.48px;width:20.0px;height:20.0px;background:#f2c12e;border-radius:50%;"></div>
<div class="r" style="left:2458.7px;top:805.98px;width:1.7000000000002728px;height:7.7000000000000455px;background:#1c2a3a;border-radius:1px;"></div>
<div class="r" style="left:2458.6px;top:815.08px;width:1.900000000000091px;height:1.8999999999999773px;background:#1c2a3a;border-radius:50%;"></div>
<div class="r" style="left:465.5px;top:852.6200000000001px;width:25.5px;height:26.0px;border:2px solid #6e7b82;background:#fdfdfd;border-radius:1px;"></div>
<div class="t" style="left:521.5px;top:856.3px;font-size:19px;color:#2a3a45;font-weight:400;letter-spacing:-0.45px;">01542512520</div>
<div class="t" style="left:742px;top:856.3px;font-size:19px;color:#2a3a45;font-weight:400;letter-spacing:0.6px;">Budweiser Magnum Beer</div>
<div class="t" style="left:1093.8px;top:856.3px;font-size:19px;color:#2a3a45;font-weight:400;letter-spacing:0.45px;">Beverages</div>
<div class="t" style="left:1305px;top:856.3px;font-size:19px;color:#2a3a45;font-weight:400;letter-spacing:0.5px;">Budweiser</div>
<div class="t" style="left:1467.3px;top:856.3px;font-size:19px;color:#2a3a45;font-weight:400;letter-spacing:0px;">42</div>
<div class="t" style="left:1583.4px;top:856.3px;font-size:19px;color:#2a3a45;font-weight:400;letter-spacing:0.2px;">Chris Stores</div>
<div class="t" style="left:1849px;top:856.3px;font-size:19px;color:#2a3a45;font-weight:400;letter-spacing:0px;">975M</div>
<div class="t" style="left:2009.4px;top:856.3px;font-size:19px;color:#2a3a45;font-weight:400;letter-spacing:0.2px;">$885K</div>
<div class="t" style="left:2185.7px;top:856.3px;font-size:19px;color:#2a3a45;font-weight:400;letter-spacing:-0.5px;">375K</div>
<div class="t" style="left:2372.8px;top:856.3px;font-size:19px;color:#2a3a45;font-weight:400;letter-spacing:-0.4px;">10 Days</div>
<div class="r" style="left:465.5px;top:906.76px;width:25.5px;height:26.0px;border:2px solid #6e7b82;background:#fdfdfd;border-radius:1px;"></div>
<div class="t" style="left:521.5px;top:910.5px;font-size:19px;color:#2a3a45;font-weight:400;letter-spacing:-1.4px;">021514151541</div>
<div class="t" style="left:742px;top:910.5px;font-size:19px;color:#2a3a45;font-weight:400;letter-spacing:0px;">Redbull Drink 05oz 125ML</div>
<div class="t" style="left:1093.8px;top:910.5px;font-size:19px;color:#2a3a45;font-weight:400;letter-spacing:0.45px;">Beverages</div>
<div class="t" style="left:1305px;top:910.5px;font-size:19px;color:#2a3a45;font-weight:400;letter-spacing:0.5px;">Redbull</div>
<div class="t" style="left:1467.3px;top:910.5px;font-size:19px;color:#2a3a45;font-weight:400;letter-spacing:-0.8px;">51</div>
<div class="t" style="left:1583.4px;top:910.5px;font-size:19px;color:#2a3a45;font-weight:400;letter-spacing:0.4px;">Partway Stores</div>
<div class="t" style="left:1849px;top:910.5px;font-size:19px;color:#ff1c2c;font-weight:700;letter-spacing:0.1px;">575M</div>
<div class="r" style="left:1910.5px;top:909.76px;width:20.0px;height:20.0px;background:#f2c12e;border-radius:50%;"></div>
<div class="r" style="left:1919.7px;top:914.26px;width:1.7000000000000455px;height:7.7000000000000455px;background:#1c2a3a;border-radius:1px;"></div>
<div class="r" style="left:1919.6px;top:923.36px;width:1.900000000000091px;height:1.8999999999999773px;background:#1c2a3a;border-radius:50%;"></div>
<div class="t" style="left:2009.4px;top:910.5px;font-size:19px;color:#2a3a45;font-weight:400;letter-spacing:0.2px;">$885K</div>
<div class="t" style="left:2185.7px;top:910.5px;font-size:19px;color:#2a3a45;font-weight:400;letter-spacing:-0.5px;">375K</div>
<div class="t" style="left:2372.8px;top:910.5px;font-size:19px;color:#ff1c2c;font-weight:700;letter-spacing:-0.3px;">7 Days</div>
<div class="r" style="left:2449.5px;top:909.76px;width:20.0px;height:20.0px;background:#f2c12e;border-radius:50%;"></div>
<div class="r" style="left:2458.7px;top:914.26px;width:1.7000000000002728px;height:7.7000000000000455px;background:#1c2a3a;border-radius:1px;"></div>
<div class="r" style="left:2458.6px;top:923.36px;width:1.900000000000091px;height:1.8999999999999773px;background:#1c2a3a;border-radius:50%;"></div>
<div class="r" style="left:465.5px;top:960.9000000000001px;width:25.5px;height:26.0px;border:2px solid #6e7b82;background:#fdfdfd;border-radius:1px;"></div>
<div class="t" style="left:521.5px;top:964.6px;font-size:19px;color:#2a3a45;font-weight:400;letter-spacing:-0.45px;">01542512520</div>
<div class="t" style="left:742px;top:964.6px;font-size:19px;color:#2a3a45;font-weight:400;letter-spacing:0.6px;">Budweiser Magnum Beer</div>
<div class="t" style="left:1093.8px;top:964.6px;font-size:19px;color:#2a3a45;font-weight:400;letter-spacing:0.45px;">Beverages</div>
<div class="t" style="left:1305px;top:964.6px;font-size:19px;color:#2a3a45;font-weight:400;letter-spacing:0.5px;">Budweiser</div>
<div class="t" style="left:1467.3px;top:964.6px;font-size:19px;color:#2a3a45;font-weight:400;letter-spacing:0px;">42</div>
<div class="t" style="left:1583.4px;top:964.6px;font-size:19px;color:#2a3a45;font-weight:400;letter-spacing:0.2px;">Chris Stores</div>
<div class="t" style="left:1849px;top:964.6px;font-size:19px;color:#2a3a45;font-weight:400;letter-spacing:0px;">975M</div>
<div class="t" style="left:2009.4px;top:964.6px;font-size:19px;color:#2a3a45;font-weight:400;letter-spacing:0.2px;">$885K</div>
<div class="t" style="left:2185.7px;top:964.6px;font-size:19px;color:#2a3a45;font-weight:400;letter-spacing:-0.5px;">375K</div>
<div class="t" style="left:2372.8px;top:964.6px;font-size:19px;color:#2a3a45;font-weight:400;letter-spacing:-0.4px;">10 Days</div>
<div class="r" style="left:465.5px;top:1015.04px;width:25.5px;height:26.0px;border:2px solid #6e7b82;background:#fdfdfd;border-radius:1px;"></div>
<div class="t" style="left:521.5px;top:1018.8px;font-size:19px;color:#2a3a45;font-weight:400;letter-spacing:-1.4px;">021514151541</div>
<div class="t" style="left:742px;top:1018.8px;font-size:19px;color:#2a3a45;font-weight:400;letter-spacing:0px;">Redbull Drink 05oz 125ML</div>
<div class="t" style="left:1093.8px;top:1018.8px;font-size:19px;color:#2a3a45;font-weight:400;letter-spacing:0.45px;">Beverages</div>
<div class="t" style="left:1305px;top:1018.8px;font-size:19px;color:#2a3a45;font-weight:400;letter-spacing:0.5px;">Redbull</div>
<div class="t" style="left:1467.3px;top:1018.8px;font-size:19px;color:#2a3a45;font-weight:400;letter-spacing:-0.8px;">51</div>
<div class="t" style="left:1583.4px;top:1018.8px;font-size:19px;color:#2a3a45;font-weight:400;letter-spacing:0.4px;">Partway Stores</div>
<div class="t" style="left:1849px;top:1018.8px;font-size:19px;color:#ff1c2c;font-weight:700;letter-spacing:0.1px;">575M</div>
<div class="r" style="left:1910.5px;top:1018.04px;width:20.0px;height:20.0px;background:#f2c12e;border-radius:50%;"></div>
<div class="r" style="left:1919.7px;top:1022.54px;width:1.7000000000000455px;height:7.7000000000000455px;background:#1c2a3a;border-radius:1px;"></div>
<div class="r" style="left:1919.6px;top:1031.6399999999999px;width:1.900000000000091px;height:1.900000000000091px;background:#1c2a3a;border-radius:50%;"></div>
<div class="t" style="left:2009.4px;top:1018.8px;font-size:19px;color:#2a3a45;font-weight:400;letter-spacing:0.2px;">$885K</div>
<div class="t" style="left:2185.7px;top:1018.8px;font-size:19px;color:#2a3a45;font-weight:400;letter-spacing:-0.5px;">375K</div>
<div class="t" style="left:2372.8px;top:1018.8px;font-size:19px;color:#ff1c2c;font-weight:700;letter-spacing:-0.3px;">7 Days</div>
<div class="r" style="left:2449.5px;top:1018.04px;width:20.0px;height:20.0px;background:#f2c12e;border-radius:50%;"></div>
<div class="r" style="left:2458.7px;top:1022.54px;width:1.7000000000002728px;height:7.7000000000000455px;background:#1c2a3a;border-radius:1px;"></div>
<div class="r" style="left:2458.6px;top:1031.6399999999999px;width:1.900000000000091px;height:1.900000000000091px;background:#1c2a3a;border-radius:50%;"></div>
<div class="r" style="left:465.5px;top:1069.18px;width:25.5px;height:26.0px;border:2px solid #6e7b82;background:#fdfdfd;border-radius:1px;"></div>
<div class="t" style="left:521.5px;top:1072.9px;font-size:19px;color:#2a3a45;font-weight:400;letter-spacing:-0.45px;">01542512520</div>
<div class="t" style="left:742px;top:1072.9px;font-size:19px;color:#2a3a45;font-weight:400;letter-spacing:0.6px;">Budweiser Magnum Beer</div>
<div class="t" style="left:1093.8px;top:1072.9px;font-size:19px;color:#2a3a45;font-weight:400;letter-spacing:0.45px;">Beverages</div>
<div class="t" style="left:1305px;top:1072.9px;font-size:19px;color:#2a3a45;font-weight:400;letter-spacing:0.5px;">Budweiser</div>
<div class="t" style="left:1467.3px;top:1072.9px;font-size:19px;color:#2a3a45;font-weight:400;letter-spacing:0px;">42</div>
<div class="t" style="left:1583.4px;top:1072.9px;font-size:19px;color:#2a3a45;font-weight:400;letter-spacing:0.2px;">Chris Stores</div>
<div class="t" style="left:1849px;top:1072.9px;font-size:19px;color:#2a3a45;font-weight:400;letter-spacing:0px;">975M</div>
<div class="t" style="left:2009.4px;top:1072.9px;font-size:19px;color:#2a3a45;font-weight:400;letter-spacing:0.2px;">$885K</div>
<div class="t" style="left:2185.7px;top:1072.9px;font-size:19px;color:#2a3a45;font-weight:400;letter-spacing:-0.5px;">375K</div>
<div class="t" style="left:2372.8px;top:1072.9px;font-size:19px;color:#2a3a45;font-weight:400;letter-spacing:-0.4px;">10 Days</div>
<div class="r" style="left:465.5px;top:1123.3200000000002px;width:25.5px;height:26.0px;border:2px solid #6e7b82;background:#fdfdfd;border-radius:1px;"></div>
<div class="t" style="left:521.5px;top:1127.0px;font-size:19px;color:#2a3a45;font-weight:400;letter-spacing:-1.4px;">021514151541</div>
<div class="t" style="left:742px;top:1127.0px;font-size:19px;color:#2a3a45;font-weight:400;letter-spacing:0px;">Redbull Drink 05oz 125ML</div>
<div class="t" style="left:1093.8px;top:1127.0px;font-size:19px;color:#2a3a45;font-weight:400;letter-spacing:0.45px;">Beverages</div>
<div class="t" style="left:1305px;top:1127.0px;font-size:19px;color:#2a3a45;font-weight:400;letter-spacing:0.5px;">Redbull</div>
<div class="t" style="left:1467.3px;top:1127.0px;font-size:19px;color:#2a3a45;font-weight:400;letter-spacing:-0.8px;">51</div>
<div class="t" style="left:1583.4px;top:1127.0px;font-size:19px;color:#2a3a45;font-weight:400;letter-spacing:0.4px;">Partway Stores</div>
<div class="t" style="left:1849px;top:1127.0px;font-size:19px;color:#ff1c2c;font-weight:700;letter-spacing:0.1px;">575M</div>
<div class="r" style="left:1910.5px;top:1126.3200000000002px;width:20.0px;height:20.0px;background:#f2c12e;border-radius:50%;"></div>
<div class="r" style="left:1919.7px;top:1130.8200000000002px;width:1.7000000000000455px;height:7.7000000000000455px;background:#1c2a3a;border-radius:1px;"></div>
<div class="r" style="left:1919.6px;top:1139.92px;width:1.900000000000091px;height:1.900000000000091px;background:#1c2a3a;border-radius:50%;"></div>
<div class="t" style="left:2009.4px;top:1127.0px;font-size:19px;color:#2a3a45;font-weight:400;letter-spacing:0.2px;">$885K</div>
<div class="t" style="left:2185.7px;top:1127.0px;font-size:19px;color:#2a3a45;font-weight:400;letter-spacing:-0.5px;">375K</div>
<div class="t" style="left:2372.8px;top:1127.0px;font-size:19px;color:#ff1c2c;font-weight:700;letter-spacing:-0.3px;">7 Days</div>
<div class="r" style="left:2449.5px;top:1126.3200000000002px;width:20.0px;height:20.0px;background:#f2c12e;border-radius:50%;"></div>
<div class="r" style="left:2458.7px;top:1130.8200000000002px;width:1.7000000000002728px;height:7.7000000000000455px;background:#1c2a3a;border-radius:1px;"></div>
<div class="r" style="left:2458.6px;top:1139.92px;width:1.900000000000091px;height:1.900000000000091px;background:#1c2a3a;border-radius:50%;"></div>
<div class="r" style="left:465.5px;top:1177.46px;width:25.5px;height:26.0px;border:2px solid #6e7b82;background:#fdfdfd;border-radius:1px;"></div>
<div class="t" style="left:521.5px;top:1181.2px;font-size:19px;color:#2a3a45;font-weight:400;letter-spacing:-0.45px;">01542512520</div>
<div class="t" style="left:742px;top:1181.2px;font-size:19px;color:#2a3a45;font-weight:400;letter-spacing:0.6px;">Budweiser Magnum Beer</div>
<div class="t" style="left:1093.8px;top:1181.2px;font-size:19px;color:#2a3a45;font-weight:400;letter-spacing:0.45px;">Beverages</div>
<div class="t" style="left:1305px;top:1181.2px;font-size:19px;color:#2a3a45;font-weight:400;letter-spacing:0.5px;">Budweiser</div>
<div class="t" style="left:1467.3px;top:1181.2px;font-size:19px;color:#2a3a45;font-weight:400;letter-spacing:0px;">42</div>
<div class="t" style="left:1583.4px;top:1181.2px;font-size:19px;color:#2a3a45;font-weight:400;letter-spacing:0.2px;">Chris Stores</div>
<div class="t" style="left:1849px;top:1181.2px;font-size:19px;color:#2a3a45;font-weight:400;letter-spacing:0px;">975M</div>
<div class="t" style="left:2009.4px;top:1181.2px;font-size:19px;color:#2a3a45;font-weight:400;letter-spacing:0.2px;">$885K</div>
<div class="t" style="left:2185.7px;top:1181.2px;font-size:19px;color:#2a3a45;font-weight:400;letter-spacing:-0.5px;">375K</div>
<div class="t" style="left:2372.8px;top:1181.2px;font-size:19px;color:#2a3a45;font-weight:400;letter-spacing:-0.4px;">10 Days</div>
<div class="r" style="left:465.5px;top:1231.6px;width:25.5px;height:26.0px;border:2px solid #6e7b82;background:#fdfdfd;border-radius:1px;"></div>
<div class="t" style="left:521.5px;top:1235.3px;font-size:19px;color:#2a3a45;font-weight:400;letter-spacing:-1.4px;">021514151541</div>
<div class="t" style="left:742px;top:1235.3px;font-size:19px;color:#2a3a45;font-weight:400;letter-spacing:0px;">Redbull Drink 05oz 125ML</div>
<div class="t" style="left:1093.8px;top:1235.3px;font-size:19px;color:#2a3a45;font-weight:400;letter-spacing:0.45px;">Beverages</div>
<div class="t" style="left:1305px;top:1235.3px;font-size:19px;color:#2a3a45;font-weight:400;letter-spacing:0.5px;">Redbull</div>
<div class="t" style="left:1467.3px;top:1235.3px;font-size:19px;color:#2a3a45;font-weight:400;letter-spacing:-0.8px;">51</div>
<div class="t" style="left:1583.4px;top:1235.3px;font-size:19px;color:#2a3a45;font-weight:400;letter-spacing:0.4px;">Partway Stores</div>
<div class="t" style="left:1849px;top:1235.3px;font-size:19px;color:#ff1c2c;font-weight:700;letter-spacing:0.1px;">575M</div>
<div class="r" style="left:1910.5px;top:1234.6px;width:20.0px;height:20.0px;background:#f2c12e;border-radius:50%;"></div>
<div class="r" style="left:1919.7px;top:1239.1px;width:1.7000000000000455px;height:7.7000000000000455px;background:#1c2a3a;border-radius:1px;"></div>
<div class="r" style="left:1919.6px;top:1248.1999999999998px;width:1.900000000000091px;height:1.900000000000091px;background:#1c2a3a;border-radius:50%;"></div>
<div class="t" style="left:2009.4px;top:1235.3px;font-size:19px;color:#2a3a45;font-weight:400;letter-spacing:0.2px;">$885K</div>
<div class="t" style="left:2185.7px;top:1235.3px;font-size:19px;color:#2a3a45;font-weight:400;letter-spacing:-0.5px;">375K</div>
<div class="t" style="left:2372.8px;top:1235.3px;font-size:19px;color:#ff1c2c;font-weight:700;letter-spacing:-0.3px;">7 Days</div>
<div class="r" style="left:2449.5px;top:1234.6px;width:20.0px;height:20.0px;background:#f2c12e;border-radius:50%;"></div>
<div class="r" style="left:2458.7px;top:1239.1px;width:1.7000000000002728px;height:7.7000000000000455px;background:#1c2a3a;border-radius:1px;"></div>
<div class="r" style="left:2458.6px;top:1248.1999999999998px;width:1.900000000000091px;height:1.900000000000091px;background:#1c2a3a;border-radius:50%;"></div>
<div class="t" style="left:466px;top:1304.2px;font-size:19px;color:#2b3a44;font-weight:700;letter-spacing:-0.3px;">Showing 1-20 of 125</div>
<div class="r" style="left:2097px;top:1289px;width:177px;height:51px;background:#cae5fb;border-radius:5px;"></div>
<div class="t" style="left:2095.5px;width:180px;text-align:center;top:1304.9px;font-size:19px;color:#ffffff;font-weight:700;letter-spacing:0.3px;">Previous</div>
<div class="r" style="left:2289px;top:1289px;width:177px;height:51px;background:#1f88db;border-radius:5px;"></div>
<div class="t" style="left:2287.5px;width:180px;text-align:center;top:1304.9px;font-size:19px;color:#ffffff;font-weight:700;letter-spacing:0.3px;">Next</div>
</div>
</body></html>
